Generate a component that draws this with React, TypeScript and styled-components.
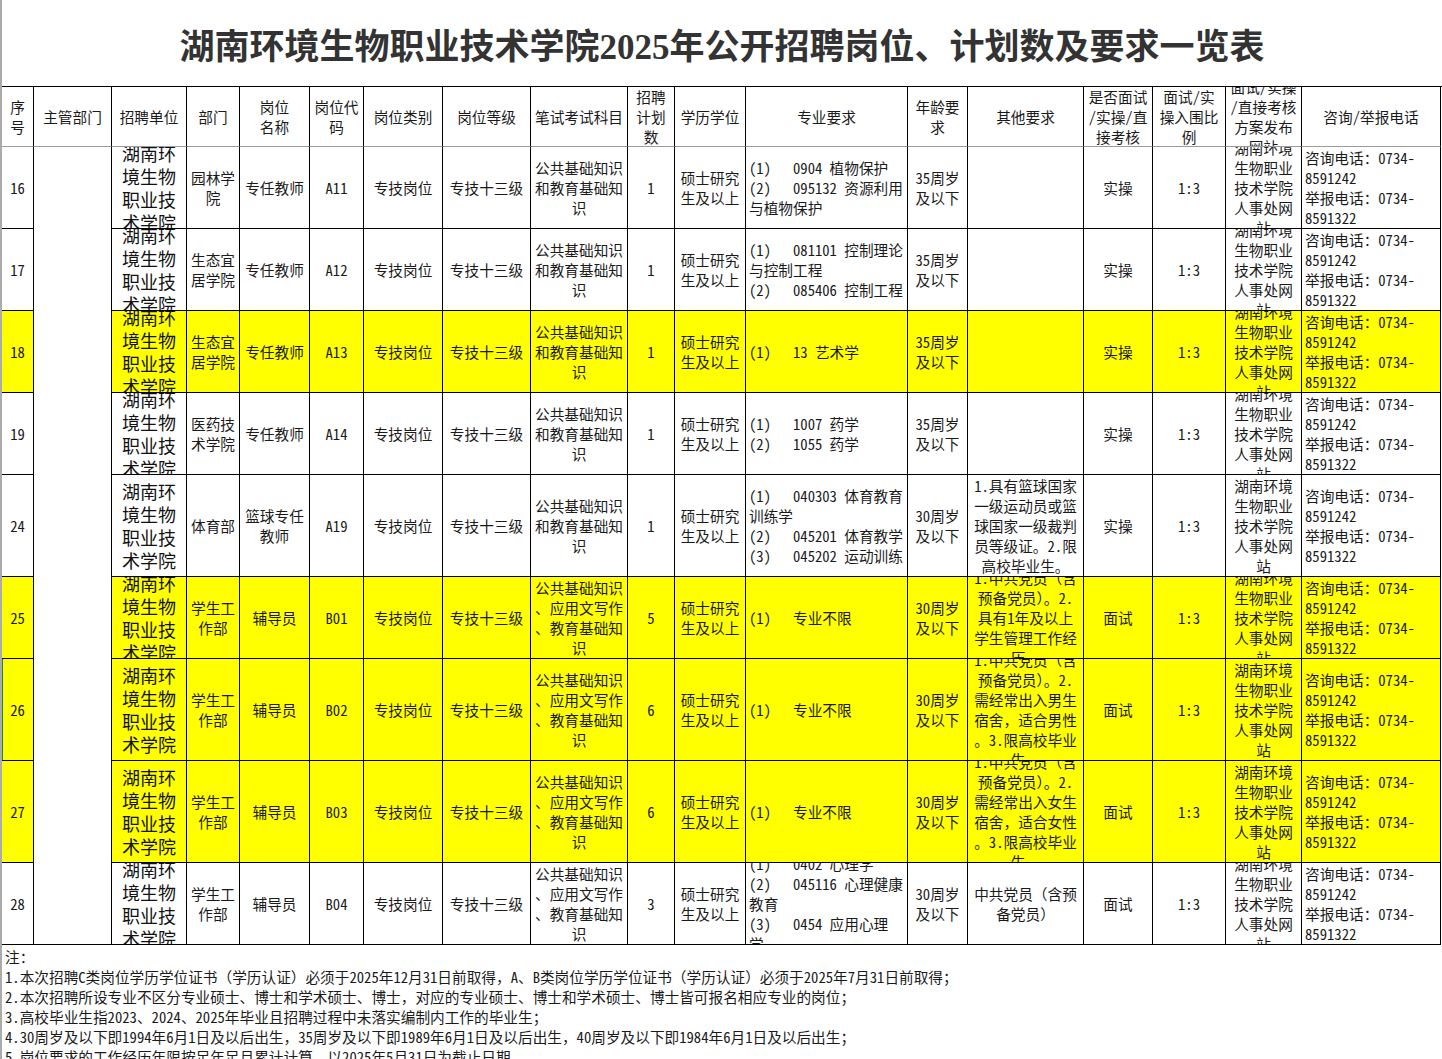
import { createGlobalStyle, styled } from "styled-components";

const GlobalStyle = createGlobalStyle`
  html, body {
    margin: 0;
    padding: 0;
    background: #fff;
  }
  body {
    font-family: "Noto Sans Mono CJK SC", "Noto Sans CJK SC", sans-serif;
    color: #111;
  }
`;

const BODY_FONT = `"Noto Sans Mono CJK SC", "Noto Sans CJK SC", sans-serif`;

// 列宽（像素），与原表格一致
const COLS = [32, 78, 75, 53, 70, 54, 79, 88, 97, 47, 71, 162, 60, 116, 69, 73, 76, 139];

const Page = styled.div`
  width: 1440px;
  border-left: 2px solid #ababab;
  min-height: 1059px;
`;

const Title = styled.h1`
  margin: 0;
  height: 86px;
  display: flex;
  align-items: center;
  justify-content: center;
  font-family: "Liberation Serif", "Noto Sans CJK SC", serif;
  font-size: 35px;
  font-weight: 700;
  color: #333;
`;

const Sheet = styled.div<{ $rows: string }>`
  display: grid;
  grid-template-columns: ${COLS.map((c) => c + "px").join(" ")};
  grid-template-rows: ${(p) => p.$rows};
  border-top: 1px solid #000;
`;

const HeadCell = styled.div`
  display: flex;
  align-items: center;
  justify-content: center;
  overflow: hidden;
  border-right: 1px solid #000;
  border-bottom: 1px solid #9c9c9c;
  background: #fff;
  font-family: ${BODY_FONT};
  font-size: 14.67px;
  line-height: 20px;
  color: #1a1a1a;
`;

const Cell = styled.div<{ $hl?: boolean; $left?: boolean; $mark?: boolean }>`
  display: flex;
  align-items: center;
  justify-content: ${(p) => (p.$left ? "flex-start" : "center")};
  overflow: hidden;
  box-sizing: border-box;
  padding-left: ${(p) => (p.$left ? "3px" : "0")};
  border-right: 1px solid #000;
  border-bottom: 1px solid #000;
  background: ${(p) => (p.$hl ? "#ffff00" : "#fff")};
  box-shadow: ${(p) => (p.$mark ? "inset 1px 0 0 #1f8a2e" : "none")};
  font-family: ${BODY_FONT};
  font-size: 14.67px;
  line-height: 20px;
  color: #1a1a1a;
`;

const UnitCell = styled(Cell)`
  font-size: 18px;
  line-height: 23px;
  font-weight: 500;
  color: #111;
`;

const MergedCell = styled.div`
  grid-column: 2;
  grid-row: 2 / span 9;
  border-right: 1px solid #000;
  border-bottom: 1px solid #000;
  background: #fff;
`;

const Lines = styled.span<{ $left?: boolean }>`
  white-space: pre;
  text-align: ${(p) => (p.$left ? "left" : "center")};
`;

const Notes = styled.div`
  padding: 2px 0 0 3px;
  font-family: ${BODY_FONT};
  font-size: 14.67px;
  line-height: 20px;
  color: #1a1a1a;
  white-space: nowrap;
`;

const HEADERS = [
  "序\n号",
  "主管部门",
  "招聘单位",
  "部门",
  "岗位\n名称",
  "岗位代\n码",
  "岗位类别",
  "岗位等级",
  "笔试考试科目",
  "招聘\n计划\n数",
  "学历学位",
  "专业要求",
  "年龄要\n求",
  "其他要求",
  "是否面试\n/实操/直\n接考核",
  "面试/实\n操入围比\n例",
  "面试/实操\n/直接考核\n方案发布\n网站",
  "咨询/举报电话",
];

const EXAM_A = "公共基础知识\n和教育基础知\n识";
const EXAM_B = "公共基础知识\n、应用文写作\n、教育基础知\n识";
const EDU = "硕士研究\n生及以上";
const UNIT = "湖南环\n境生物\n职业技\n术学院";
const PUBLISH = "湖南环境\n生物职业\n技术学院\n人事处网\n站";
const PHONE = "咨询电话：0734-\n8591242\n举报电话：0734-\n8591322";

type Row = {
  no: string;
  dept: string;
  post: string;
  code: string;
  exam: string;
  num: string;
  major: string;
  age: string;
  other: string;
  mode: string;
  h: number;
  hl?: boolean;
  mark?: boolean;
};

const ROWS: Row[] = [
  {
    no: "16", dept: "园林学\n院", post: "专任教师", code: "A11", exam: EXAM_A, num: "1",
    major: "(1)   0904 植物保护\n(2)   095132 资源利用\n与植物保护",
    age: "35周岁\n及以下", other: "", mode: "实操", h: 82,
  },
  {
    no: "17", dept: "生态宜\n居学院", post: "专任教师", code: "A12", exam: EXAM_A, num: "1",
    major: "(1)   081101 控制理论\n与控制工程\n(2)   085406 控制工程\n",
    age: "35周岁\n及以下", other: "", mode: "实操", h: 82,
  },
  {
    no: "18", dept: "生态宜\n居学院", post: "专任教师", code: "A13", exam: EXAM_A, num: "1",
    major: "(1)   13 艺术学\n",
    age: "35周岁\n及以下", other: "", mode: "实操", h: 82, hl: true,
  },
  {
    no: "19", dept: "医药技\n术学院", post: "专任教师", code: "A14", exam: EXAM_A, num: "1",
    major: "(1)   1007 药学\n(2)   1055 药学\n",
    age: "35周岁\n及以下", other: "", mode: "实操", h: 82,
  },
  {
    no: "24", dept: "体育部", post: "篮球专任\n教师", code: "A19", exam: EXAM_A, num: "1",
    major: "(1)   040303 体育教育\n训练学\n(2)   045201 体育教学\n(3)   045202 运动训练\n",
    age: "30周岁\n及以下",
    other: "1.具有篮球国家\n一级运动员或篮\n球国家一级裁判\n员等级证。2.限\n高校毕业生。",
    mode: "实操", h: 102,
  },
  {
    no: "25", dept: "学生工\n作部", post: "辅导员", code: "B01", exam: EXAM_B, num: "5",
    major: "(1)   专业不限\n",
    age: "30周岁\n及以下",
    other: "1.中共党员（含\n预备党员）。2.\n具有1年及以上\n学生管理工作经\n历。",
    mode: "面试", h: 82, hl: true,
  },
  {
    no: "26", dept: "学生工\n作部", post: "辅导员", code: "B02", exam: EXAM_B, num: "6",
    major: "(1)   专业不限\n",
    age: "30周岁\n及以下",
    other: "1.中共党员（含\n预备党员）。2.\n需经常出入男生\n宿舍，适合男性\n。3.限高校毕业\n生。",
    mode: "面试", h: 102, hl: true, mark: true,
  },
  {
    no: "27", dept: "学生工\n作部", post: "辅导员", code: "B03", exam: EXAM_B, num: "6",
    major: "(1)   专业不限\n",
    age: "30周岁\n及以下",
    other: "1.中共党员（含\n预备党员）。2.\n需经常出入女生\n宿舍，适合女性\n。3.限高校毕业\n生。",
    mode: "面试", h: 102, hl: true,
  },
  {
    no: "28", dept: "学生工\n作部", post: "辅导员", code: "B04", exam: EXAM_B, num: "3",
    major: "(1)   0402 心理学\n(2)   045116 心理健康\n教育\n(3)   0454 应用心理\n学",
    age: "30周岁\n及以下",
    other: "中共党员（含预\n备党员）",
    mode: "面试", h: 82,
  },
];

const NOTES = [
  "注：",
  "1.本次招聘C类岗位学历学位证书（学历认证）必须于2025年12月31日前取得，A、B类岗位学历学位证书（学历认证）必须于2025年7月31日前取得；",
  "2.本次招聘所设专业不区分专业硕士、博士和学术硕士、博士，对应的专业硕士、博士和学术硕士、博士皆可报名相应专业的岗位；",
  "3.高校毕业生指2023、2024、2025年毕业且招聘过程中未落实编制内工作的毕业生；",
  "4.30周岁及以下即1994年6月1日及以后出生，35周岁及以下即1989年6月1日及以后出生，40周岁及以下即1984年6月1日及以后出生；",
  "5.岗位要求的工作经历年限按足年足月累计计算，以2025年5月31日为截止日期。",
];

function DataRow({ r }: { r: Row }) {
  const hl = r.hl;
  return (
    <>
      <Cell $hl={hl} $mark={r.mark}><Lines>{r.no}</Lines></Cell>
      <UnitCell $hl={hl}><Lines>{UNIT}</Lines></UnitCell>
      <Cell $hl={hl}><Lines>{r.dept}</Lines></Cell>
      <Cell $hl={hl}><Lines>{r.post}</Lines></Cell>
      <Cell $hl={hl}><Lines>{r.code}</Lines></Cell>
      <Cell $hl={hl}><Lines>专技岗位</Lines></Cell>
      <Cell $hl={hl}><Lines>专技十三级</Lines></Cell>
      <Cell $hl={hl}><Lines>{r.exam}</Lines></Cell>
      <Cell $hl={hl}><Lines>{r.num}</Lines></Cell>
      <Cell $hl={hl}><Lines>{EDU}</Lines></Cell>
      <Cell $hl={hl} $left><Lines $left>{r.major}</Lines></Cell>
      <Cell $hl={hl}><Lines>{r.age}</Lines></Cell>
      <Cell $hl={hl}><Lines>{r.other}</Lines></Cell>
      <Cell $hl={hl}><Lines>{r.mode}</Lines></Cell>
      <Cell $hl={hl}><Lines>1:3</Lines></Cell>
      <Cell $hl={hl}><Lines>{PUBLISH}</Lines></Cell>
      <Cell $hl={hl} $left><Lines $left>{PHONE}</Lines></Cell>
    </>
  );
}

export default function App() {
  const rowTemplate = ["60px", ...ROWS.map((r) => r.h + "px")].join(" ");
  return (
    <Page>
      <GlobalStyle />
      <Title>湖南环境生物职业技术学院2025年公开招聘岗位、计划数及要求一览表</Title>
      <Sheet $rows={rowTemplate}>
        {HEADERS.map((h, i) => (
          <HeadCell key={i}><Lines>{h}</Lines></HeadCell>
        ))}
        <MergedCell />
        {ROWS.map((r) => (
          <DataRow key={r.no} r={r} />
        ))}
      </Sheet>
      <Notes>
        {NOTES.map((n, i) => (
          <div key={i}>{n}</div>
        ))}
      </Notes>
    </Page>
  );
}
